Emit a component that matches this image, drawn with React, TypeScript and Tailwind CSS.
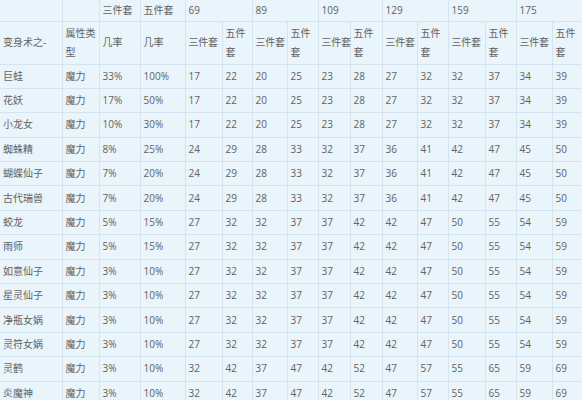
import React from "react";

const widths = [62, 37, 41, 45, 37, 30, 35, 31, 32, 32, 35, 31, 37, 31, 36, 36];

type Row = [string, string, string, string, number[]];

const a = [17, 22, 20, 25, 23, 28, 27, 32, 32, 37, 34, 39];
const b = [24, 29, 28, 33, 32, 37, 36, 41, 42, 47, 45, 50];
const c = [27, 32, 32, 37, 37, 42, 42, 47, 50, 55, 54, 59];
const d = [32, 42, 37, 47, 42, 52, 47, 57, 55, 65, 59, 69];

const rows: Row[] = [
  ["巨蛙", "魔力", "33%", "100%", a],
  ["花妖", "魔力", "17%", "50%", a],
  ["小龙女", "魔力", "10%", "30%", a],
  ["蜘蛛精", "魔力", "8%", "25%", b],
  ["蝴蝶仙子", "魔力", "7%", "20%", b],
  ["古代瑞兽", "魔力", "7%", "20%", b],
  ["蛟龙", "魔力", "5%", "15%", c],
  ["雨师", "魔力", "5%", "15%", c],
  ["如意仙子", "魔力", "3%", "10%", c],
  ["星灵仙子", "魔力", "3%", "10%", c],
  ["净瓶女娲", "魔力", "3%", "10%", c],
  ["灵符女娲", "魔力", "3%", "10%", c],
  ["灵鹤", "魔力", "3%", "10%", d],
  ["炎魔神", "魔力", "3%", "10%", d],
];

const td = "border border-[#d3e4f0] pl-[3px] pr-0 align-middle text-left font-normal whitespace-nowrap";

export default function App() {
  return (
    <div
      className="w-[582px] h-[400px] overflow-hidden bg-[#e9f4fb] text-[10px] leading-[19px] text-[#626262]"
      style={{ fontFamily: '"Open Sans", "Noto Sans CJK SC", sans-serif' }}
    >
      <table className="table-fixed border-collapse w-[588px]">
        <colgroup>
          {widths.map((w, i) => (
            <col key={i} style={{ width: w }} />
          ))}
        </colgroup>
        <thead>
          <tr className="h-[21px]">
            <th className={`${td} border-t-0 border-l-0 pl-[2px]`}></th>
            <th className={`${td} border-t-0`}></th>
            <th className={`${td} border-t-0`}>三件套</th>
            <th className={`${td} border-t-0`}>五件套</th>
            <th className={`${td} border-t-0`} colSpan={2}>69</th>
            <th className={`${td} border-t-0`} colSpan={2}>89</th>
            <th className={`${td} border-t-0`} colSpan={2}>109</th>
            <th className={`${td} border-t-0`} colSpan={2}>129</th>
            <th className={`${td} border-t-0`} colSpan={2}>159</th>
            <th className={`${td} border-t-0`} colSpan={2}>175</th>
          </tr>
          <tr className="h-[43px]">
            <th className={`${td} border-l-0 pl-[2px]`}>变身术之-</th>
            <th className={td}>
              属性类
              <br />型
            </th>
            <th className={td}>几率</th>
            <th className={td}>几率</th>
            {[0, 1, 2, 3, 4, 5].map((i) => (
              <React.Fragment key={i}>
                <th className={`${td} tracking-[-0.3px]`}>三件套</th>
                <th className={td}>
                  五件
                  <br />套
                </th>
              </React.Fragment>
            ))}
          </tr>
        </thead>
        <tbody>
          {rows.map((r) => (
            <tr key={r[0]} className="h-[24.4px]">
              <td className={`${td} border-l-0 pl-[2px]`}>{r[0]}</td>
              <td className={td}>{r[1]}</td>
              <td className={td}>{r[2]}</td>
              <td className={td}>{r[3]}</td>
              {r[4].map((v, i) => (
                <td key={i} className={td}>
                  {v}
                </td>
              ))}
            </tr>
          ))}
        </tbody>
      </table>
    </div>
  );
}
